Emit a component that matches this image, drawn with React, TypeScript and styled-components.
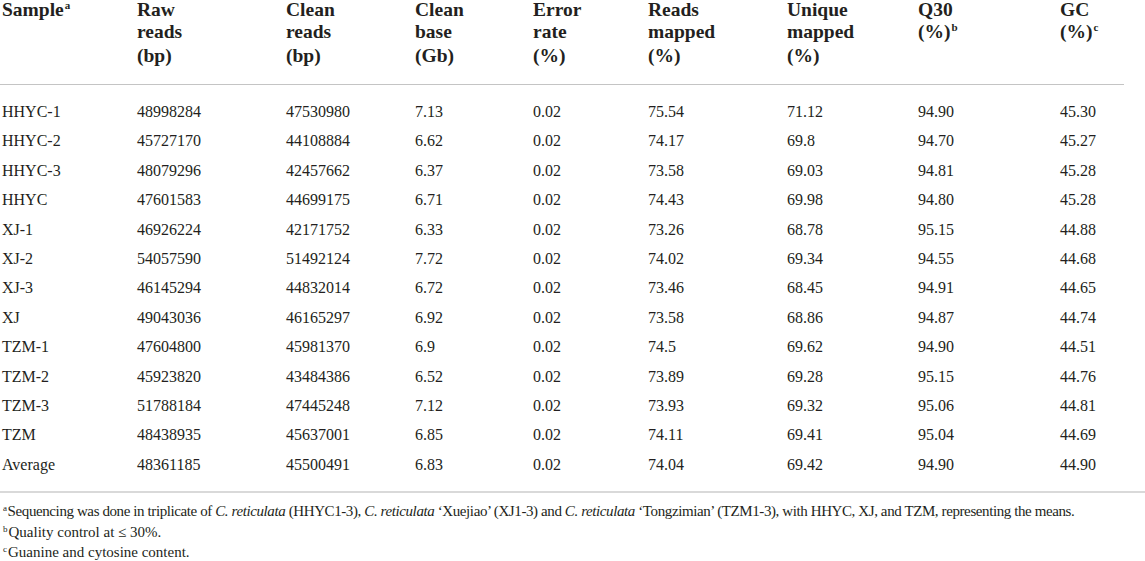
import React from 'react';
import styled, { createGlobalStyle } from 'styled-components';

const GlobalStyle = createGlobalStyle`
  html, body {
    margin: 0;
    padding: 0;
    background: #ffffff;
  }
  body {
    font-family: "Liberation Serif", "Times New Roman", serif;
    color: #231f20;
  }
`;

type Column = {
  lines: string[];
  note?: string;
  width: number;
};

const columns: Column[] = [
  { lines: ['Sample'], note: 'a', width: 135 },
  { lines: ['Raw', 'reads', '(bp)'], width: 149 },
  { lines: ['Clean', 'reads', '(bp)'], width: 129 },
  { lines: ['Clean', 'base', '(Gb)'], width: 118 },
  { lines: ['Error', 'rate', '(%)'], width: 115 },
  { lines: ['Reads', 'mapped', '(%)'], width: 139 },
  { lines: ['Unique', 'mapped', '(%)'], width: 131 },
  { lines: ['Q30', '(%)'], note: 'b', width: 142 },
  { lines: ['GC', '(%)'], note: 'c', width: 66 },
];

const rows: string[][] = [
  ['HHYC-1', '48998284', '47530980', '7.13', '0.02', '75.54', '71.12', '94.90', '45.30'],
  ['HHYC-2', '45727170', '44108884', '6.62', '0.02', '74.17', '69.8', '94.70', '45.27'],
  ['HHYC-3', '48079296', '42457662', '6.37', '0.02', '73.58', '69.03', '94.81', '45.28'],
  ['HHYC', '47601583', '44699175', '6.71', '0.02', '74.43', '69.98', '94.80', '45.28'],
  ['XJ-1', '46926224', '42171752', '6.33', '0.02', '73.26', '68.78', '95.15', '44.88'],
  ['XJ-2', '54057590', '51492124', '7.72', '0.02', '74.02', '69.34', '94.55', '44.68'],
  ['XJ-3', '46145294', '44832014', '6.72', '0.02', '73.46', '68.45', '94.91', '44.65'],
  ['XJ', '49043036', '46165297', '6.92', '0.02', '73.58', '68.86', '94.87', '44.74'],
  ['TZM-1', '47604800', '45981370', '6.9', '0.02', '74.5', '69.62', '94.90', '44.51'],
  ['TZM-2', '45923820', '43484386', '6.52', '0.02', '73.89', '69.28', '95.15', '44.76'],
  ['TZM-3', '51788184', '47445248', '7.12', '0.02', '73.93', '69.32', '95.06', '44.81'],
  ['TZM', '48438935', '45637001', '6.85', '0.02', '74.11', '69.41', '95.04', '44.69'],
  ['Average', '48361185', '45500491', '6.83', '0.02', '74.04', '69.42', '94.90', '44.90'],
];

const Page = styled.div`
  width: 1145px;
  height: 561px;
  overflow: hidden;
`;

const Table = styled.table`
  width: 1124px;
  border-collapse: collapse;
  table-layout: fixed;
`;

const HeadCell = styled.th`
  text-align: left;
  vertical-align: top;
  font-weight: 700;
  font-size: 19.5px;
  line-height: 23.5px;
  padding: 0 0 17px 2px;
  border-bottom: 1px solid #c4c4c4;
`;

const HeadLine = styled.span`
  display: block;
  white-space: nowrap;

  &:first-child {
    line-height: 20px;
  }
`;

const HeadNote = styled.sup`
  font-size: 11px;
  line-height: 0;
  vertical-align: 7px;
  margin-left: 1px;
`;

const BodyRow = styled.tr`
  &:first-child td {
    padding-top: 12px;
  }
  &:last-child td {
    padding-bottom: 12px;
  }
`;

const Cell = styled.td`
  font-size: 16px;
  line-height: 29.4px;
  padding: 0 0 0 2px;
  white-space: nowrap;
`;

const Notes = styled.div`
  border-top: 2px solid #d9d9d9;
  padding: 8px 0 0 3px;
  font-size: 15px;
  line-height: 20.3px;
`;

const Note = styled.p<{ $tight?: boolean }>`
  margin: 0;
  white-space: nowrap;
  letter-spacing: ${(p) => (p.$tight ? '-0.4px' : '0')};
`;

const Mark = styled.sup`
  font-size: 9px;
  line-height: 0;
  vertical-align: 5px;
  margin-right: 1px;
`;

const Species = styled.i`
  font-style: italic;
`;

const App = () => {
  return (
    <Page>
      <GlobalStyle />
      <Table>
        <colgroup>
          {columns.map((c, i) => (
            <col key={i} style={{ width: c.width }} />
          ))}
        </colgroup>
        <thead>
          <tr>
            {columns.map((c, i) => (
              <HeadCell key={i}>
                {c.lines.map((line, j) => (
                  <HeadLine key={j}>
                    {line}
                    {c.note && j === c.lines.length - 1 && <HeadNote>{c.note}</HeadNote>}
                  </HeadLine>
                ))}
              </HeadCell>
            ))}
          </tr>
        </thead>
        <tbody>
          {rows.map((r, i) => (
            <BodyRow key={i}>
              {r.map((v, j) => (
                <Cell key={j}>{v}</Cell>
              ))}
            </BodyRow>
          ))}
        </tbody>
      </Table>
      <Notes>
        <Note $tight>
          <Mark>a</Mark>Sequencing was done in triplicate of <Species>C. reticulata</Species> (HHYC1-3),{' '}
          <Species>C. reticulata</Species> ‘Xuejiao’ (XJ1-3) and <Species>C. reticulata</Species> ‘Tongzimian’
          (TZM1-3), with HHYC, XJ, and TZM, representing the means.
        </Note>
        <Note>
          <Mark>b</Mark>Quality control at ≤ 30%.
        </Note>
        <Note>
          <Mark>c</Mark>Guanine and cytosine content.
        </Note>
      </Notes>
    </Page>
  );
};

export default App;
